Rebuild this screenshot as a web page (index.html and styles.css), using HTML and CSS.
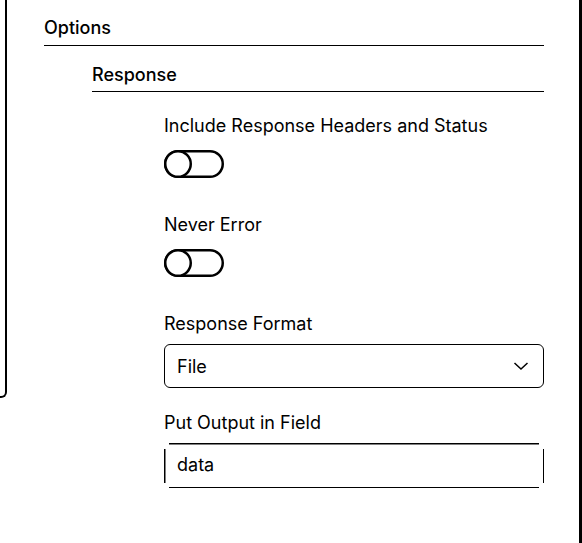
FILE: index.html
```html
<!DOCTYPE html>
<html lang="en">
<head>
<meta charset="utf-8">
<title>Options</title>
<link rel="stylesheet" href="styles.css">
</head>
<body>
<div class="page">
  <div class="left-panel"></div>
  <main class="content">
    <section class="options">
      <h2 class="section-title">Options</h2>
      <section class="response">
        <h3 class="sub-title">Response</h3>
        <div class="fields">
          <div class="field">
            <label class="field-label">Include Response Headers and Status</label>
            <span class="toggle">
              <svg width="60" height="28" viewBox="0 0 60 28"><rect x="1.25" y="1.25" width="57.5" height="25.5" rx="12.75" fill="none" stroke="#000" stroke-width="2.5"/><circle cx="14" cy="14" r="12.75" fill="#fff" stroke="#000" stroke-width="2.5"/></svg>
            </span>
          </div>
          <div class="field">
            <label class="field-label">Never Error</label>
            <span class="toggle">
              <svg width="60" height="28" viewBox="0 0 60 28"><rect x="1.25" y="1.25" width="57.5" height="25.5" rx="12.75" fill="none" stroke="#000" stroke-width="2.5"/><circle cx="14" cy="14" r="12.75" fill="#fff" stroke="#000" stroke-width="2.5"/></svg>
            </span>
          </div>
          <div class="field">
            <label class="field-label">Response Format</label>
            <div class="select">
              <span>File</span>
              <svg class="chevron" width="16" height="10" viewBox="0 0 16 10"><path d="M1.5 2 L8 8 L14.5 2" fill="none" stroke="#000" stroke-width="1.5"/></svg>
            </div>
          </div>
          <div class="field field-last">
            <label class="field-label">Put Output in Field</label>
            <div class="text-input">data</div>
          </div>
        </div>
      </section>
    </section>
  </main>
  <div class="right-bar"></div>
</div>
</body>
</html>
```
FILE: styles.css
```css
html, body {
  margin: 0;
  padding: 0;
  background: #fff;
}
body {
  font-family: Inter, "Liberation Sans", sans-serif;
  color: #000;
  font-size: 18px;
}
.page {
  display: grid;
  grid-template-columns: 7px 1fr 3px;
  height: 543px;
  overflow: hidden;
}
.left-panel {
  height: 398px;
  border-right: 2px solid #000;
  border-bottom: 2px solid #000;
  border-bottom-right-radius: 6px;
  box-sizing: border-box;
  margin-left: -20px;
  width: 27px;
}
.right-bar {
  background: #000;
}
.content {
  padding: 16px 35px 0 37px;
}
.section-title {
  margin: 0;
  font-size: 18px;
  font-weight: 500;
  line-height: 24px;
  padding-bottom: 5px;
  border-bottom: 1.5px solid #000;
}
.response {
  margin-left: 48px;
  margin-top: 17px;
}
.sub-title {
  margin: 0;
  font-size: 18px;
  font-weight: 500;
  line-height: 24px;
  padding-bottom: 4px;
  border-bottom: 1.5px solid #000;
}
.fields {
  margin-left: 72px;
  padding-top: 22px;
  display: flex;
  flex-direction: column;
  gap: 35px;
}
.field {
  display: flex;
  flex-direction: column;
  align-items: flex-start;
}
.field-last {
  margin-top: -12px;
}
.field-label {
  line-height: 24px;
  margin-bottom: 9px;
}
.field-last .field-label {
  margin-bottom: 8px;
}
.toggle {
  display: block;
  margin-top: 3px;
  height: 28px;
}
.toggle svg {
  display: block;
}
.select {
  box-sizing: border-box;
  width: 380px;
  height: 44px;
  margin-top: -1px;
  border: 1.5px solid #000;
  border-radius: 6px;
  display: flex;
  align-items: center;
  justify-content: space-between;
  padding: 0 14px 0 12px;
}
.chevron {
  display: block;
}
.text-input {
  box-sizing: border-box;
  width: 380px;
  height: 45px;
  line-height: 44px;
  padding-left: 13px;
  background:
    linear-gradient(#000, #000) 5px 0 / 370px 1.5px no-repeat,
    linear-gradient(#000, #000) 5px 43.5px / 370px 1.5px no-repeat,
    linear-gradient(#000, #000) 0 6px / 1.5px 34px no-repeat,
    linear-gradient(#000, #000) 378.5px 6px / 1.5px 34px no-repeat;
}
```
